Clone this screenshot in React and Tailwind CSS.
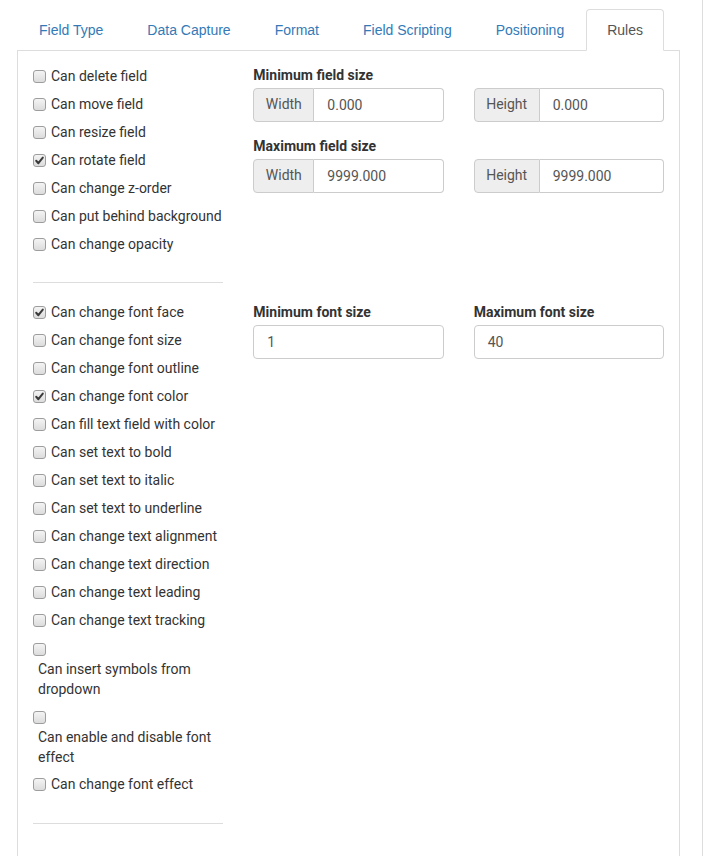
import React from "react";

const tabs = ["Field Type", "Data Capture", "Format", "Field Scripting", "Positioning", "Rules"];

function Box({ checked }) {
  return (
    <span className="relative inline-block h-[13px] w-[13px] shrink-0 rounded-[3px] border border-[#9d9d9d] bg-gradient-to-b from-[#f4f4f4] to-[#dcdcdc]">
      {checked && (
        <svg viewBox="0 0 13 13" className="absolute left-[-1px] top-[-1px] h-[13px] w-[13px]">
          <path d="M3.2 6.8 L5.4 9.2 L9.8 3.6" fill="none" stroke="#3a3a3a" strokeWidth="2" strokeLinecap="round" strokeLinejoin="round" />
        </svg>
      )}
    </span>
  );
}

function Row({ label, checked }) {
  return (
    <div className="flex h-7 items-center">
      <Box checked={checked} />
      <span className="ml-[5px] whitespace-nowrap">{label}</span>
    </div>
  );
}

function WrapRow({ label }) {
  return (
    <div className="pb-[3px]">
      <div className="h-[25px] pt-[7px]">
        <Box />
      </div>
      <div className="w-[185px] pl-[5px] leading-5">{label}</div>
    </div>
  );
}

function Group({ addon, value, addonW }) {
  return (
    <div className="flex h-[34px]">
      <div className={`flex ${addonW} items-center justify-center rounded-l-[4px] border border-[#ccc] bg-[#eee] pb-px text-[#555]`}>
        {addon}
      </div>
      <div className="flex flex-1 items-center rounded-r-[4px] border border-l-0 border-[#ccc] pl-[13px] text-[#555]">
        {value}
      </div>
    </div>
  );
}

function Label({ children }) {
  return <div className="mb-[3px] font-bold leading-5 text-[#333]">{children}</div>;
}

export default function App() {
  return (
    <div
      className="min-h-screen w-[703px] border-r border-[#ddd] bg-white pl-[17px] pr-[22px] text-[14px] text-[#333]"
      style={{ fontFamily: "Roboto, 'Liberation Sans', sans-serif" }}
    >
      <ul
        className="flex border-b border-[#ddd] pt-[9px]"
        style={{ fontFamily: "'Liberation Sans', Arial, sans-serif" }}
      >
        {tabs.map((t) => {
          const active = t === "Rules";
          return (
            <li
              key={t}
              className={
                active
                  ? "-mb-px rounded-t-[4px] border border-[#ddd] border-b-white bg-white px-[20px] py-[10px] leading-5 text-[#555]"
                  : "-mb-px border border-transparent px-[21px] py-[10px] leading-5 text-[#337ab7]"
              }
            >
              {t}
            </li>
          );
        })}
      </ul>
      <div className="border-x border-[#ddd] pb-10 pt-[10px]">
        <div className="grid grid-cols-3">
          <div className="px-[15px] pt-px">
            <Row label="Can delete field" />
            <Row label="Can move field" />
            <Row label="Can resize field" />
            <Row label="Can rotate field" checked />
            <Row label="Can change z-order" />
            <Row label="Can put behind background" />
            <Row label="Can change opacity" />
            <div className="mb-[15px] mt-[24px] h-px bg-[#ddd]" />
          </div>
          <div className="px-[15px] pt-1">
            <Label>Minimum field size</Label>
            <Group addon="Width" value="0.000" addonW="w-[61px]" />
            <div className="mt-[14px]">
              <Label>Maximum field size</Label>
              <Group addon="Width" value="9999.000" addonW="w-[61px]" />
            </div>
          </div>
          <div className="px-[15px] pt-1">
            <div className="mb-[3px] h-5" />
            <Group addon="Height" value="0.000" addonW="w-[66px]" />
            <div className="mt-[14px]">
              <div className="mb-[3px] h-5" />
              <Group addon="Height" value="9999.000" addonW="w-[66px]" />
            </div>
          </div>
        </div>
        <div className="grid grid-cols-3">
          <div className="px-[15px]">
            <Row label="Can change font face" checked />
            <Row label="Can change font size" />
            <Row label="Can change font outline" />
            <Row label="Can change font color" checked />
            <Row label="Can fill text field with color" />
            <Row label="Can set text to bold" />
            <Row label="Can set text to italic" />
            <Row label="Can set text to underline" />
            <Row label="Can change text alignment" />
            <Row label="Can change text direction" />
            <Row label="Can change text leading" />
            <Row label="Can change text tracking" />
            <WrapRow label="Can insert symbols from dropdown" />
            <WrapRow label="Can enable and disable font effect" />
            <Row label="Can change font effect" />
            <div className="mt-[25px] h-px bg-[#ddd]" />
          </div>
          <div className="px-[15px] pt-1">
            <Label>Minimum font size</Label>
            <div className="flex h-[34px] items-center rounded-[4px] border border-[#ccc] pl-[13px] text-[#555]">1</div>
          </div>
          <div className="px-[15px] pt-1">
            <Label>Maximum font size</Label>
            <div className="flex h-[34px] items-center rounded-[4px] border border-[#ccc] pl-[13px] text-[#555]">40</div>
          </div>
        </div>
      </div>
    </div>
  );
}
